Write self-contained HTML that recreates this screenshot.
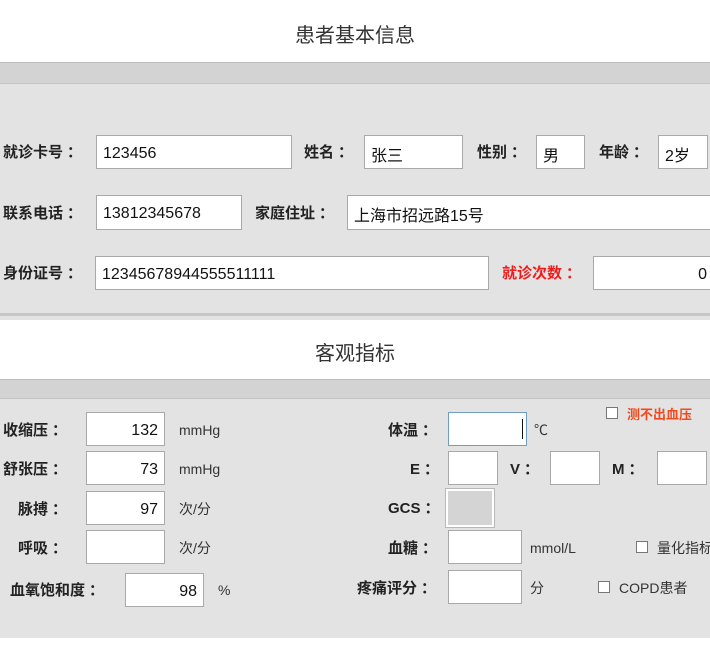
<!DOCTYPE html>
<html><head><meta charset="utf-8"><style>
*{margin:0;padding:0;box-sizing:border-box}
body{width:710px;height:658px;position:relative;background:#fff;overflow:hidden;font-family:"Liberation Sans","Noto Sans CJK SC",sans-serif;color:#222}
.a{position:absolute}
.band{position:absolute;left:0;width:710px;background:#d3d3d3;border-top:1px solid #bdbdbd;border-bottom:1px solid #c4c4c4}
.bg{position:absolute;left:0;width:710px;background:#e3e3e3}
.t{position:absolute;left:0;width:710px;text-align:center;font-size:20px;color:#333}
.l{position:absolute;font-size:15px;font-weight:bold;color:#222;white-space:nowrap;line-height:20px}
.l b{display:inline-block;margin-left:4px;font-weight:bold}
.i{position:absolute;background:#fff;border:1px solid #a9a9a9;font-size:16px;padding:3px 6px 0;color:#111;white-space:nowrap;display:flex;align-items:center}
.r{justify-content:flex-end}
.u{position:absolute;font-size:14px;color:#333;line-height:18px;white-space:nowrap}
.cb{position:absolute;width:12px;height:12px;border:1px solid #777;background:#fff}
</style></head><body>
<div class="t" style="top:19px">患者基本信息</div>
<div class="band" style="top:62px;height:22px"></div>
<div class="bg" style="top:84px;height:230px"></div>
<div class="a" style="left:0;top:313px;width:710px;height:3px;background:#c6c6c6"></div>
<div class="bg" style="top:316px;height:4px"></div>
<div class="t" style="top:337px">客观指标</div>
<div class="band" style="top:379px;height:20px"></div>
<div class="bg" style="top:399px;height:239px"></div>

<div class="l" style="left:3px;top:143px">就诊卡号<b>：</b></div>
<div class="i" style="left:96px;top:135px;width:196px;height:34px">123456</div>
<div class="l" style="left:304px;top:143px">姓名<b>：</b></div>
<div class="i" style="left:364px;top:135px;width:99px;height:34px">张三</div>
<div class="l" style="left:477px;top:143px">性别<b>：</b></div>
<div class="i" style="left:536px;top:135px;width:49px;height:34px">男</div>
<div class="l" style="left:599px;top:143px">年龄<b>：</b></div>
<div class="i" style="left:658px;top:135px;width:50px;height:34px">2岁</div>

<div class="l" style="left:3px;top:204px">联系电话<b>：</b></div>
<div class="i" style="left:96px;top:195px;width:146px;height:35px">13812345678</div>
<div class="l" style="left:255px;top:204px">家庭住址<b>：</b></div>
<div class="i" style="left:347px;top:195px;width:370px;height:35px">上海市招远路15号</div>

<div class="l" style="left:3px;top:264px">身份证号<b>：</b></div>
<div class="i" style="left:95px;top:256px;width:394px;height:34px">12345678944555511111</div>
<div class="l" style="left:502px;top:264px;color:#f01c1c">就诊次数<b>：</b></div>
<div class="i r" style="left:593px;top:256px;width:125px;height:34px;padding-right:10px">0</div>

<div class="l" style="left:3px;top:421px">收缩压<b>：</b></div>
<div class="i r" style="left:86px;top:412px;width:79px;height:34px">132</div>
<div class="u" style="left:179px;top:421px">mmHg</div>
<div class="l" style="left:3px;top:460px">舒张压<b>：</b></div>
<div class="i r" style="left:86px;top:451px;width:79px;height:34px">73</div>
<div class="u" style="left:179px;top:460px">mmHg</div>
<div class="l" style="left:18px;top:500px">脉搏<b>：</b></div>
<div class="i r" style="left:86px;top:491px;width:79px;height:34px">97</div>
<div class="u" style="left:179px;top:500px">次/分</div>
<div class="l" style="left:18px;top:539px">呼吸<b>：</b></div>
<div class="i r" style="left:86px;top:530px;width:79px;height:34px"></div>
<div class="u" style="left:179px;top:539px">次/分</div>
<div class="l" style="left:10px;top:581px">血氧饱和度<b>：</b></div>
<div class="i r" style="left:125px;top:573px;width:79px;height:34px">98</div>
<div class="u" style="left:218px;top:581px">%</div>

<div class="l" style="left:388px;top:421px">体温<b>：</b></div>
<div class="i" style="left:448px;top:412px;width:79px;height:34px;border-color:#6f9ec0"></div>
<div class="a" style="left:522px;top:419px;width:1px;height:20px;background:#111"></div>
<div class="u" style="left:534px;top:421px">℃</div>
<div class="cb" style="left:606px;top:407px"></div>
<div class="l" style="left:627px;top:405px;font-size:13px;color:#f04a1e">测不出血压</div>

<div class="l" style="left:410px;top:460px">E<b>：</b></div>
<div class="i" style="left:448px;top:451px;width:50px;height:34px"></div>
<div class="l" style="left:510px;top:460px">V<b>：</b></div>
<div class="i" style="left:550px;top:451px;width:50px;height:34px"></div>
<div class="l" style="left:612px;top:460px">M<b>：</b></div>
<div class="i" style="left:657px;top:451px;width:50px;height:34px"></div>

<div class="l" style="left:388px;top:499px">GCS<b>：</b></div>
<div class="a" style="left:445px;top:488px;width:50px;height:40px;border:1px solid #b8b8b8;background:#fff;padding:2px"><div style="width:100%;height:100%;background:#d4d4d4"></div></div>

<div class="l" style="left:388px;top:539px">血糖<b>：</b></div>
<div class="i" style="left:448px;top:530px;width:74px;height:34px"></div>
<div class="u" style="left:530px;top:539px">mmol/L</div>
<div class="cb" style="left:636px;top:541px"></div>
<div class="u" style="left:657px;top:539px">量化指标</div>

<div class="l" style="left:357px;top:579px">疼痛评分<b>：</b></div>
<div class="i" style="left:448px;top:570px;width:74px;height:34px"></div>
<div class="u" style="left:530px;top:579px">分</div>
<div class="cb" style="left:598px;top:581px"></div>
<div class="u" style="left:619px;top:579px">COPD患者</div>
</body></html>
